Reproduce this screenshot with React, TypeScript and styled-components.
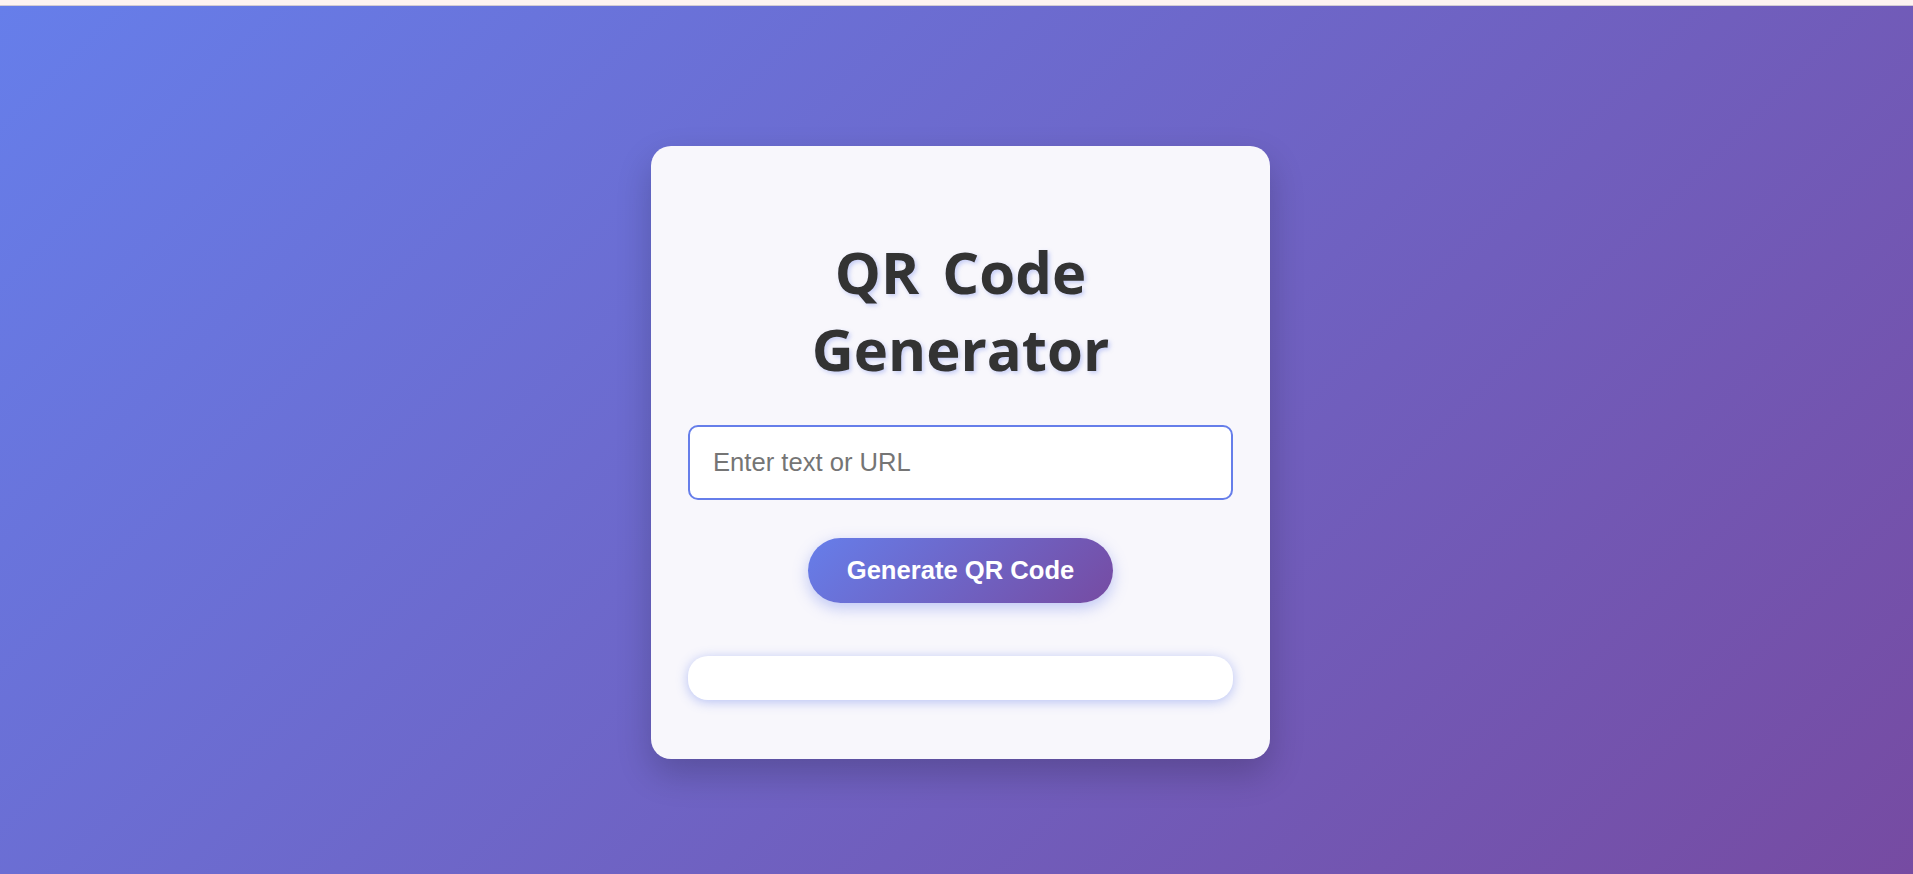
import React, { useState } from "react";
import styled, { createGlobalStyle } from "styled-components";

const GlobalStyle = createGlobalStyle`
  html, body {
    margin: 0;
    padding: 0;
    background: #fdf3f1;
  }
  * { box-sizing: border-box; }
`;

const TopStrip = styled.div`
  height: 6px;
  background: #fdf3f1;
  border-bottom: 1px solid #d2cbd4;
`;

const Main = styled.main`
  min-height: 868px;
  background: linear-gradient(135deg, #667eea 0%, #764ba2 100%);
  display: flex;
  justify-content: center;
  align-items: flex-start;
  padding: 140px 0 0 8px;
`;

const Card = styled.section`
  width: 619px;
  padding: 37px;
  background: #f8f7fc;
  border-radius: 20px;
  box-shadow: 0 15px 35px rgba(0, 0, 0, 0.2);
  display: flex;
  flex-direction: column;
  align-items: center;
`;

const Title = styled.h1`
  margin: 50px auto 38px;
  max-width: 460px;
  font-family: "Open Sans", "Noto Sans", sans-serif;
  font-weight: 700;
  font-size: 58px;
  line-height: 77px;
  word-spacing: 8px;
  color: #333;
  text-align: center;
  text-shadow: 2px 2px 4px rgba(102, 126, 234, 0.35);
`;

const TextInput = styled.input`
  width: 100%;
  height: 75px;
  border: 2px solid #667eea;
  border-radius: 10px;
  padding: 0 23px;
  font-family: "Liberation Sans", Arial, sans-serif;
  font-size: 25.6px;
  color: #333;
  background: #fff;
  outline: none;
  &::placeholder {
    color: #757575;
  }
`;

const GenerateButton = styled.button`
  margin-top: 38px;
  height: 65px;
  padding: 0 39px;
  border: none;
  border-radius: 50px;
  background: linear-gradient(135deg, #667eea 0%, #764ba2 100%);
  color: #fff;
  font-family: "Liberation Sans", Arial, sans-serif;
  font-weight: 700;
  font-size: 25.6px;
  cursor: pointer;
  box-shadow: 0 5px 15px rgba(102, 126, 234, 0.4);
`;

const Result = styled.div`
  width: 100%;
  height: 44px;
  margin: 53px 0 22px;
  background: #fff;
  border-radius: 20px;
  box-shadow: 0 2px 12px rgba(102, 126, 234, 0.45);
`;

export default function App() {
  const [text, setText] = useState("");
  return (
    <>
      <GlobalStyle />
      <TopStrip />
      <Main>
        <Card>
          <Title>QR Code Generator</Title>
          <TextInput
            type="text"
            placeholder="Enter text or URL"
            value={text}
            onChange={(e) => setText(e.target.value)}
          />
          <GenerateButton type="button">Generate QR Code</GenerateButton>
          <Result />
        </Card>
      </Main>
    </>
  );
}
